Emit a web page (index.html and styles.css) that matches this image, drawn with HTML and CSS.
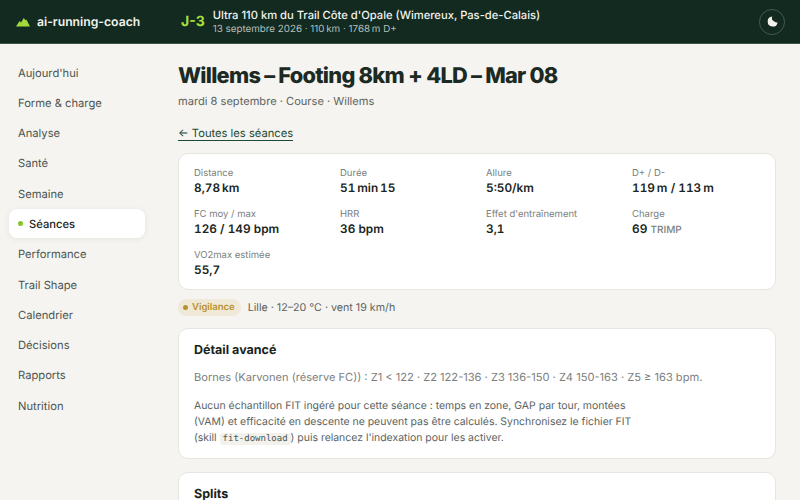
FILE: index.html
```html
<!DOCTYPE html>
<html lang="fr">
<head>
    <meta charset="UTF-8">
    <title>ai-running-coach</title>
    <link rel="stylesheet" href="styles.css">
</head>
<body>
    <header class="topbar">
        <div class="brand">
            <svg class="brand-icon" width="14" height="10" viewBox="0 0 14 10"><path d="M0 9.5 3.6 4 5 5.4 7.8 1 9.4 3.2 10.4 2.6 14 9.5Z" fill="#a3d93a"/></svg>
            <span>ai-running-coach</span>
        </div>
        <div class="race">
            <span class="countdown">J-3</span>
            <div>
                <div class="race-name">Ultra 110 km du Trail Côte d'Opale (Wimereux, Pas-de-Calais)</div>
                <div class="race-meta">13 septembre 2026 · 110&thinsp;km · 1768&thinsp;m D+</div>
            </div>
        </div>
        <button class="theme-btn" aria-label="Thème">
            <svg width="11" height="11" viewBox="0 0 11 11"><path d="M5.2 .6A5 5 0 1 0 10.6 6.4 4 4 0 0 1 7.4 5.6 3.6 3.6 0 0 1 5.2 .6Z" fill="#f3f3ee"/></svg>
        </button>
    </header>

    <div class="layout">
        <nav class="sidebar">
            <a href="#">Aujourd'hui</a>
            <a href="#">Forme &amp; charge</a>
            <a href="#">Analyse</a>
            <a href="#">Santé</a>
            <a href="#">Semaine</a>
            <a href="#" class="active"><span class="dot"></span>Séances</a>
            <a href="#">Performance</a>
            <a href="#">Trail Shape</a>
            <a href="#">Calendrier</a>
            <a href="#">Décisions</a>
            <a href="#">Rapports</a>
            <a href="#">Nutrition</a>
        </nav>

        <main class="content">
            <h1>Willems – Footing 8km + 4LD – Mar 08</h1>
            <p class="subtitle">mardi 8 septembre · Course · Willems</p>
            <a href="#" class="back-link">← Toutes les séances</a>

            <section class="card stats">
                <div class="stat"><div class="label">Distance</div><div class="value">8,78&thinsp;km</div></div>
                <div class="stat"><div class="label">Durée</div><div class="value">51&thinsp;min&thinsp;15</div></div>
                <div class="stat"><div class="label">Allure</div><div class="value">5:50/km</div></div>
                <div class="stat"><div class="label">D+ / D-</div><div class="value">119&thinsp;m / 113&thinsp;m</div></div>
                <div class="stat"><div class="label">FC moy / max</div><div class="value">126 / 149 bpm</div></div>
                <div class="stat"><div class="label">HRR</div><div class="value">36 bpm</div></div>
                <div class="stat"><div class="label">Effet d'entraînement</div><div class="value">3,1</div></div>
                <div class="stat"><div class="label">Charge</div><div class="value">69 <span class="unit">TRIMP</span></div></div>
                <div class="stat"><div class="label">VO2max estimée</div><div class="value">55,7</div></div>
            </section>

            <div class="weather">
                <span class="badge"><span class="badge-dot"></span>Vigilance</span>
                <span>Lille · 12–20 °C · vent 19 km/h</span>
            </div>

            <section class="card detail">
                <h2>Détail avancé</h2>
                <p class="zones">Bornes (Karvonen (réserve FC)) : Z1 &lt; 122 · Z2 122-136 · Z3 136-150 · Z4 150-163 · Z5 ≥ 163 bpm.</p>
                <p class="note">Aucun échantillon FIT ingéré pour cette séance : temps en zone, GAP par tour, montées<br>(VAM) et efficacité en descente ne peuvent pas être calculés. Synchronisez le fichier FIT<br>(skill <code>fit-download</code>) puis relancez l'indexation pour les activer.</p>
            </section>

            <section class="card splits">
                <h2>Splits</h2>
            </section>
        </main>
    </div>
</body>
</html>
```

FILE: styles.css
```css
html, body {
    margin: 0;
    padding: 0;
    height: 500px;
    overflow: hidden;
}
body {
    font-family: Inter, "Liberation Sans", sans-serif;
    background-color: #f5f4f0;
    color: #1a2420;
    text-rendering: geometricPrecision;
}
.topbar {
    height: 43px;
    box-sizing: content-box;
    background-color: #122a1f;
    border-bottom: 1px solid #3c5348;
    display: flex;
    align-items: center;
    padding: 0 16px;
}
.brand {
    width: 165px;
    display: flex;
    align-items: center;
    gap: 7px;
    font-size: 12.2px;
    font-weight: 600;
    color: #f3f3ee;
}
.brand-icon {
    flex: none;
}
.race {
    flex: 1;
    display: flex;
    align-items: center;
    gap: 8px;
}
.countdown {
    font-size: 14px;
    font-weight: 700;
    color: #a9e03c;
}
.race-name {
    font-size: 11.2px;
    line-height: 15px;
    font-weight: 500;
    margin-top: 1px;
    color: #f3f3ee;
}
.race-meta {
    font-size: 9.8px;
    line-height: 14px;
    color: #b4bfb9;
}
.theme-btn {
    width: 26px;
    height: 26px;
    padding: 0;
    margin-right: -1px;
    border: 1px solid #47594f;
    border-radius: 50%;
    background: transparent;
    display: flex;
    align-items: center;
    justify-content: center;
}
.layout {
    display: flex;
}
.sidebar {
    width: 136px;
    flex: none;
    margin-left: 9px;
    padding-top: 14px;
    display: flex;
    flex-direction: column;
    gap: 1.3px;
}
.sidebar a {
    height: 29px;
    padding-left: 9px;
    display: flex;
    align-items: center;
    font-size: 11.2px;
    color: #4d5551;
    text-decoration: none;
}
.sidebar a.active {
    background-color: white;
    border-radius: 8px;
    box-shadow: 0 1px 6px rgba(0,0,0,0.07);
    color: #1a2420;
    font-weight: 500;
}
.dot {
    width: 5px;
    height: 5px;
    border-radius: 50%;
    background-color: #84c52c;
    margin-right: 6px;
}
.content {
    width: 598px;
    margin-left: 33px;
}
h1 {
    margin: 18px 0 0;
    font-size: 21.8px;
    line-height: 28px;
    font-weight: 800;
    letter-spacing: -0.75px;
    color: #1c2a24;
}
.subtitle {
    margin: 3px 0 0;
    font-size: 11.1px;
    line-height: 16px;
    color: #5c6360;
}
.back-link {
    display: inline-block;
    margin-top: 17px;
    font-size: 11.2px;
    line-height: 14px;
    color: #1c4a34;
    text-decoration: none;
    border-bottom: 1px solid #1c4a34;
}
.card {
    box-sizing: border-box;
    background-color: white;
    border: 1px solid #e6e5df;
    border-radius: 10px;
    padding: 13px 15px 12px;
}
.stats {
    margin-top: 12px;
    height: 137px;
    display: grid;
    grid-template-columns: repeat(4, 1fr);
    grid-auto-rows: 41px;
    column-gap: 18px;
}
.label {
    font-size: 9.5px;
    line-height: 13px;
    color: #7b807d;
}
.value {
    font-size: 11.8px;
    line-height: 17px;
    font-weight: 600;
    font-variant-numeric: tabular-nums;
    color: #1a2420;
}
.unit {
    font-size: 10px;
    font-weight: 500;
    color: #7b807d;
}
.weather {
    margin-top: 9px;
    display: flex;
    align-items: center;
    gap: 7px;
    font-size: 10.7px;
    color: #5c6360;
}
.badge {
    display: flex;
    align-items: center;
    gap: 4px;
    height: 17px;
    padding: 0 6px 0 5px;
    border-radius: 9px;
    background-color: #f0e9d8;
    font-size: 9.5px;
    font-weight: 600;
    color: #b8922c;
}
.badge-dot {
    width: 5px;
    height: 5px;
    border-radius: 50%;
    background-color: #b8922c;
}
.detail {
    margin-top: 12px;
    height: 131px;
}
h2 {
    margin: 0;
    font-size: 12.5px;
    line-height: 18px;
    font-weight: 700;
    color: #1a2420;
}
.zones {
    margin: 9px 0 0;
    font-size: 11.1px;
    line-height: 16px;
    color: #7b807d;
}
.note {
    margin: 13px 0 0;
    font-size: 10.45px;
    line-height: 16px;
    color: #5c6360;
}
code {
    font-family: "DejaVu Sans Mono", monospace;
    font-size: 9px;
    padding: 1px 3px;
    border-radius: 3px;
    background-color: #f2f1ec;
    color: #4d5551;
}
.splits {
    margin-top: 13px;
    height: 60px;
}
```
